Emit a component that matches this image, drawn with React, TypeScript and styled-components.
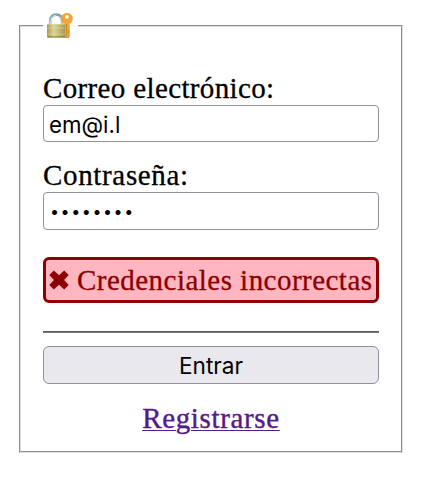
import React, { useState } from "react";
import styled, { createGlobalStyle } from "styled-components";

const GlobalStyle = createGlobalStyle`
  *, *::before, *::after { box-sizing: border-box; }
  body {
    margin: 0;
    background: #fff;
    color: #000;
    font-family: Georgia, "Liberation Serif", serif;
    font-size: 29px;
  }
`;

const Page = styled.main`
  padding: 12px 26px 0 19px;
`;

const Frame = styled.fieldset`
  width: 384px;
  height: 441px;
  margin: 0;
  padding: 33px 22px 0;
  border: 2px groove #e0e0e0;
`;

const Legend = styled.legend`
  display: flex;
  width: 35px;
  height: 28px;
  padding: 0 3px;
`;

const Form = styled.form`
  display: flex;
  flex-direction: column;
`;

const Field = styled.div<{ $gap: number }>`
  display: flex;
  flex-direction: column;
  margin-bottom: ${(p) => p.$gap}px;
`;

const Text = styled.span<{ $spacing: number }>`
  letter-spacing: ${(p) => p.$spacing}px;
  white-space: nowrap;
`;

const Label = styled.label`
  height: 32px;
  line-height: 30px;
  -webkit-text-stroke: 0.3px currentColor;
`;

const Input = styled.input<{ $height: number }>`
  width: 100%;
  height: ${(p) => p.$height}px;
  padding: 2px 5px 0;
  border: 1px solid #8f8f9d;
  border-radius: 4px;
  background: #fff;
  color: #000;
  font: 22.3px Inter, sans-serif;
  outline: none;

  &[type="password"] {
    padding: 0 6px;
    font-size: 16px;
    letter-spacing: 1.6px;
  }
`;

const ErrorMessage = styled.div`
  display: flex;
  align-items: center;
  gap: 8px;
  height: 46px;
  padding: 0 3px;
  border: 3px solid #8b0000;
  border-radius: 6px;
  background: #ffb6c1;
  color: #8b0000;
  line-height: 42px;
  -webkit-text-stroke: 0.3px currentColor;
`;

const Rule = styled.hr`
  width: 100%;
  height: 2px;
  margin: 28px 0 13px;
  border: 0;
  border-top: 1px solid #5b5b5f;
  border-bottom: 1px solid #79797c;
`;

const Button = styled.button`
  height: 38px;
  padding: 1px 0 0;
  border: 1px solid #8f8f9d;
  border-radius: 6px;
  background: #e9e9ed;
  color: #000;
  font: 22.6px Inter, sans-serif;
`;

const RegisterLink = styled.a`
  align-self: center;
  height: 36px;
  margin-top: 16px;
  color: #551a8b;
  line-height: 36px;
  text-decoration: underline;
  text-decoration-thickness: 1px;
  text-underline-offset: 2px;
  -webkit-text-stroke: 0.4px currentColor;
`;

const LockIcon = () => (
  <svg width="29" height="28" viewBox="0 0 29 28" aria-label="Acceso">
    <defs>
      <linearGradient id="body" x1="0" x2="1" y1="0" y2="0">
        <stop offset="0" stopColor="#a99b50" />
        <stop offset="0.3" stopColor="#dcd596" />
        <stop offset="0.65" stopColor="#b8ad64" />
        <stop offset="1" stopColor="#8e7b35" />
      </linearGradient>
      <linearGradient id="shackle" x1="0" x2="0" y1="0" y2="1">
        <stop offset="0" stopColor="#7f9eb5" />
        <stop offset="1" stopColor="#c3ced5" />
      </linearGradient>
    </defs>
    <path d="M4.200 13V9.200C4.200 4.800 6.700 2.600 10.200 2.600s6 2.200 6 6.600V13" fill="none" stroke="url(#shackle)" strokeWidth="2.800" />
    <path d="M5 12V9.400C5 5.600 7 3.400 10.200 3.400" fill="none" stroke="#dfe9ef" strokeWidth=".8" />
    <rect x="1" y="12" width="22.500" height="13.500" rx="1" fill="url(#body)" />
    <path d="M1.500 12.500h21.500M1.500 16h21.500M1.500 22h21.500" stroke="#eee8b6" strokeWidth=".6" opacity=".6" />
    <path d="M1.500 25h21.500" stroke="#847637" />
    <path d="M21 1c-3.300 0-5.800 2.400-5.800 5.600 0 2.800 1.600 4.800 3.800 5.500V24l2 2 2-1.800V22l-1-1 1.100-1-1.100-1 1.100-1v-5.900c2.300-.9 3.700-2.800 3.700-5.500C26.800 3.300 24.400 1 21 1Z" fill="#f2a532" />
    <circle cx="21" cy="4.900" r="1.900" fill="#fffaf0" />
    <path d="M20.500 12v12" stroke="#cf8423" strokeWidth=".9" />
  </svg>
);

const CrossIcon = () => (
  <svg width="20" height="20" viewBox="0 0 20 20" aria-hidden="true">
    <path
      d="M4.800.5 10 5.300 15.200.5l4.500 4.600-4.600 4.900 4.600 4.900-4.500 4.600L10 14.700l-5.200 4.800-4.500-4.600L4.900 10 .3 5.100Z"
      fill="currentColor"
    />
  </svg>
);

export default function App() {
  const [email, setEmail] = useState("em@i.l");
  const [password, setPassword] = useState("password");

  return (
    <Page>
      <GlobalStyle />
      <Frame>
        <Legend><LockIcon /></Legend>
        <Form onSubmit={(e) => e.preventDefault()}>
          <Field $gap={18}>
            <Label htmlFor="email"><Text $spacing={0.36}>Correo electrónico:</Text></Label>
            <Input id="email" $height={37} value={email} onChange={(e) => setEmail(e.target.value)} />
          </Field>
          <Field $gap={27}>
            <Label htmlFor="password"><Text $spacing={0.66}>Contraseña:</Text></Label>
            <Input id="password" type="password" $height={38} value={password} onChange={(e) => setPassword(e.target.value)} />
          </Field>
          <ErrorMessage role="alert">
            <CrossIcon />
            <Text $spacing={0.47}>Credenciales incorrectas</Text>
          </ErrorMessage>
          <Rule />
          <Button type="submit">Entrar</Button>
          <RegisterLink href="#registro"><Text $spacing={0.65}>Registrarse</Text></RegisterLink>
        </Form>
      </Frame>
    </Page>
  );
}
